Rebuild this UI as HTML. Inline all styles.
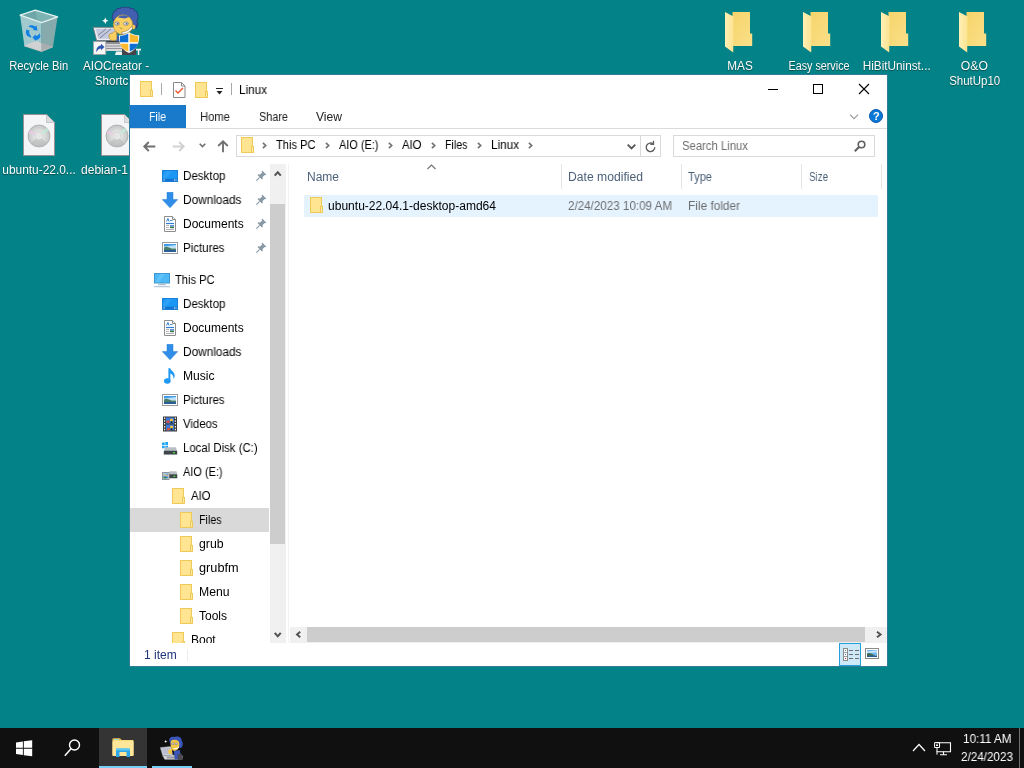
<!DOCTYPE html>
<html><head><meta charset="utf-8"><title>Linux</title>
<style>
*{box-sizing:border-box;margin:0;padding:0}
html,body{width:1024px;height:768px;overflow:hidden;background:#038387;font-family:"Liberation Sans","DejaVu Sans",sans-serif;font-size:12px;color:#000}
.a{position:absolute}
.t{position:absolute;white-space:nowrap;line-height:16px;height:16px;transform-origin:0 50%;will-change:transform}
.dl{position:absolute;color:#fff;text-align:center;white-space:nowrap;line-height:15px;font-size:12px;text-shadow:0 1px 1px rgba(0,0,0,.4),0 0 1px rgba(0,0,0,.25);will-change:transform}
.dl span{display:inline-block;transform-origin:50% 50%}
#win{position:absolute;left:130px;top:75px;width:757px;height:591px;background:#fff;overflow:hidden}
#winb{position:absolute;left:129px;top:74px;width:759px;height:593px;background:#2e7d96}
#tb{position:absolute;left:0;top:728px;width:1024px;height:40px;background:#101010}
svg{position:absolute;overflow:visible}
</style></head><body>
<svg width="0" height="0" style="position:absolute">
<defs>
<symbol id="fo" viewBox="0 0 14 16"><rect x="0.5" y="0.5" width="11" height="15" fill="#ffe591" stroke="#efca57"/><rect x="10.5" y="9.5" width="2" height="6" fill="#ffeaa6" stroke="#efca57"/></symbol>
<symbol id="pin" viewBox="0 0 11 11"><path d="M6.2 0.6 L10.4 4.8 L9.3 5.3 L8.6 4.9 L6.6 6.9 L6.7 8.9 L5.9 9.4 L1.6 5.1 L2.1 4.3 L4.1 4.4 L6.1 2.4 L5.7 1.7 Z" fill="#8797a3"/><path d="M3.6 7.4 L0.4 10.6" stroke="#8797a3" stroke-width="1.1"/></symbol>
<symbol id="dsk" viewBox="0 0 16 16"><rect x="0.5" y="2.5" width="15" height="11" fill="#1c97f3" stroke="#1a7fd6"/><path d="M5 3L10 3L4 10.500L1 10.500L1 8z" fill="#3aa8f8" opacity="0.6"/><rect x="1" y="10.800" width="14" height="2.200" fill="#1173cf"/><rect x="1.500" y="11.500" width="1.200" height="1" fill="#fff"/><rect x="12" y="11.500" width="1" height="1" fill="#fff"/><rect x="13.500" y="11.500" width="1" height="1" fill="#fff"/></symbol>
<symbol id="dwn" viewBox="0 0 16 16"><path d="M5 0.300h6v7.300h4.700L8 15.800L0.300 7.600h4.700z" fill="#2f8fe8" stroke="#2379d3" stroke-width="0.500"/></symbol>
<symbol id="doc" viewBox="0 0 16 16"><path d="M2.500 0.500h8l3 3v12h-11z" fill="#fff" stroke="#8e8e8e"/><path d="M10.500 0.500v3h3" fill="#f0f0f0" stroke="#8e8e8e"/><path d="M4.500 5.500L6 2.500L7 5.500" fill="none" stroke="#2f7fd6" stroke-width="1"/><path d="M8 4.500h2.500" stroke="#4a95de" stroke-width="1"/><path d="M4 7.500h8" stroke="#2f7fd6" stroke-width="1.200"/><path d="M4 9.500h3M4 11.500h3M4 13.500h8" stroke="#a9a9a9" stroke-width="0.900"/><rect x="8" y="9" width="4" height="1.500" fill="#5a9be0"/><rect x="8" y="10.500" width="4" height="1.700" fill="#3f7a55"/></symbol>
<symbol id="pic" viewBox="0 0 16 16"><rect x="0.500" y="2.500" width="15" height="11" fill="#fff" stroke="#9a9a9a"/><rect x="2" y="4" width="12" height="8" fill="#3f9be9"/><path d="M2 6.500L14 5V9H2z" fill="#bfe0f6"/><path d="M2 10.500V7.500Q4.500 6 7 7.500T12 8.500L14 8.800V10.500z" fill="#4d7d62"/><path d="M2 12V10Q7 9.300 14 10.300V12z" fill="#2a5c98"/></symbol>
<symbol id="pc" viewBox="0 0 16 16"><rect x="0.500" y="1.500" width="15" height="9.500" fill="#4cb9f6" stroke="#3d97d4"/><path d="M6 2L11 2L5 10.500L1 10.500z" fill="#6cc8fa" opacity="0.600"/><rect x="6.500" y="11.500" width="3" height="1" fill="#9cb3c5"/><rect x="4" y="12.300" width="8" height="0.900" fill="#9cb3c5"/><rect x="0" y="14.200" width="16" height="1" fill="#a8bfd1"/></symbol>
<symbol id="mus" viewBox="0 0 16 16"><ellipse cx="5.300" cy="13" rx="3.300" ry="2.700" fill="#1e98f5"/><path d="M6.400 0.300h1.900c0.400 2.600 4.800 3.600 4.400 8c-0.100 1.100-0.600 2.100-1.300 2.900c0.700-3-1.200-5-3.100-5.600V13h-1.900z" fill="#1e98f5"/></symbol>
<symbol id="vid" viewBox="0 0 16 16"><rect x="1" y="0.500" width="14" height="15" fill="#3b3b3b"/><rect x="4" y="1.500" width="8" height="6" fill="#3a78dc"/><rect x="4" y="8.500" width="8" height="6" fill="#3a78dc"/><path d="M2 1.500h1.200v1.500h-1.200z M2 4.300h1.200v1.500h-1.200z M2 7.100h1.200v1.500h-1.200z M2 9.900h1.200v1.500h-1.200z M2 12.700h1.200v1.500h-1.200z M12.800 1.500h1.200v1.500h-1.200z M12.800 4.300h1.200v1.500h-1.200z M12.800 7.100h1.200v1.500h-1.200z M12.800 9.900h1.200v1.500h-1.200z M12.800 12.700h1.200v1.500h-1.200z" fill="#f2f2f2"/><circle cx="9.500" cy="4" r="1.600" fill="#f2c53a"/><rect x="4.500" y="4.500" width="3" height="2.500" fill="#d8503a"/><circle cx="9.500" cy="11" r="1.600" fill="#f2c53a"/><rect x="5" y="12" width="3" height="2.300" fill="#d8503a"/><rect x="8.700" y="5.300" width="1.600" height="2" fill="#222"/><rect x="8.700" y="12.300" width="1.600" height="2" fill="#222"/></symbol>
<symbol id="hdc" viewBox="0 0 16 16"><path d="M0 2.500h2.700v2.600h-2.700z M3.300 2h2.700v3.100h-2.700z M0 5.700h2.700v2.600h-2.700z M3.300 5.700h2.700v3h-2.700z" fill="#1fa5f3"/><path d="M1.800 11L3.200 7.300h10.600L15.200 11z" fill="#b9c0c5"/><rect x="1.800" y="10.800" width="13.400" height="3.800" rx="0.700" fill="#3f464b"/><rect x="1.800" y="14" width="13.400" height="0.700" fill="#8d959b"/><rect x="11" y="12" width="1.800" height="1.300" fill="#3fe32c"/></symbol>
<symbol id="usb" viewBox="0 0 16 16"><path d="M6.500 10.500L7.500 7.300h7L15.300 10.500z" fill="#b9c0c5"/><rect x="6.500" y="10.300" width="8.800" height="4" rx="0.600" fill="#3f464b"/><rect x="11.500" y="11.700" width="1.800" height="1.300" fill="#3fe32c"/><rect x="0.500" y="8.500" width="6.500" height="7" fill="#e8ecef" stroke="#8d959b"/><rect x="1.500" y="9.500" width="4.500" height="5" fill="#4d8fd0"/><circle cx="3" cy="11" r="1.100" fill="#e9c9a0"/><path d="M1.500 14.500v-1.500q1.500-1.200 3 0v1.500z" fill="#3f8a5a"/><circle cx="5" cy="11.500" r="0.900" fill="#e9c9a0"/></symbol>
</defs>
</svg>
<svg width="0" height="0" style="position:absolute"><defs>
<linearGradient id="gfb" x1="0" y1="0" x2="1" y2="1"><stop offset="0" stop-color="#f5d46a"/><stop offset="1" stop-color="#fbe08a"/></linearGradient>
<linearGradient id="gff" x1="0" y1="0" x2="1" y2="0"><stop offset="0" stop-color="#fff0b5"/><stop offset="1" stop-color="#fde391"/></linearGradient>
<symbol id="bigfo" viewBox="0 0 28 42"><path d="M7.5 0H25V21.5H27.2V34H7.5z" fill="url(#gfb)"/><path d="M0 0L8.6 4.6L8.2 40.5L0 34.5z" fill="url(#gff)"/></symbol>
<radialGradient id="gcd" cx="0.5" cy="0.5" r="0.5"><stop offset="0" stop-color="#f4f4f4"/><stop offset="0.25" stop-color="#e9e9e9"/><stop offset="1" stop-color="#c4c6c6"/></radialGradient>
<symbol id="iso" viewBox="0 0 32 42"><path d="M0.5 0.5H23.5L31.5 8.5V41.5H0.5z" fill="#f4f5f7" stroke="#9a8f92"/><path d="M23.5 0.5V8.5H31.5z" fill="#dcdde0" stroke="#b5b0b2" stroke-width="0.6"/><circle cx="16" cy="22" r="11" fill="url(#gcd)" stroke="#a9abab" stroke-width="0.8"/><path d="M16 22L5.5 19.5A11 11 0 0 1 7 16z" fill="#f0c8e8" opacity="0.7"/><path d="M16 22L23.5 14A11 11 0 0 1 25.5 16.5z" fill="#bff0d8" opacity="0.8"/><path d="M16 22L8 29.5A11 11 0 0 0 24 29.5z" fill="#b4b7b7" opacity="0.55"/><circle cx="16" cy="22" r="3.6" fill="#f1f1f1" stroke="#c9c9c9" stroke-width="0.7"/><circle cx="16" cy="22" r="1.4" fill="#fbfbfb" stroke="#bdbdbd" stroke-width="0.6"/></symbol>
</defs></svg>
<!-- recycle bin -->
<svg style="left:19px;top:9px" width="40" height="44" viewBox="0 0 40 44">
<path d="M1.100 6.200L16.300 1.200L38.600 7.800L22.600 13.700z" fill="#6fa7a8"/><path d="M16.300 1.200L38.600 7.800L22.600 13.700L18 10z" fill="#7db3b3"/>
<path d="M1.100 6.200L22.600 13.700V42.600L5.400 37z" fill="#a2cace"/>
<path d="M22.600 13.700L38.600 7.800L33.900 37.900L22.600 42.600z" fill="#87aaad"/>
<path d="M5 36.700L16.300 32L22.600 34V42.600z" fill="#cfd1d3"/><path d="M22.600 34L34.300 37.500L22.600 42.600z" fill="#a9aeb1"/><path d="M5 36.700L5.400 37L22.600 42.600L33.900 37.900" fill="none" stroke="#d9c4c0" stroke-width="0.600"/>
<path d="M1.100 6.200L16.300 1.200L38.600 7.800L22.600 13.700z" fill="none" stroke="#e4f1f1" stroke-width="1.300" stroke-linejoin="round"/>
<g fill="#1080e4"><path d="M9.500 17.500C11 15.500 14 16 16 17.500L17.500 16.500L18.500 21.500L13.500 21L15 20C13.500 18.800 12 18.500 9.500 17.500z"/><path d="M7.500 20.500L10.500 21.500C9.800 23.500 10.500 25.500 12 27L12.300 28.800L8.500 27C6.500 25 6.500 22.500 7.500 20.500z"/><path d="M13.500 28.500L16.500 25.500L17 27C19 26.500 20 25.500 20.500 24L21.500 27.500C20.500 30 18.500 31 16.800 31L17 32.300z"/></g>
</svg>
<div class="dl" style="left:-11px;top:59px;width:100px"><span style="transform:scaleX(0.9312)">Recycle Bin</span></div>
<!-- AIOCreator -->
<svg style="left:92px;top:5px" width="50" height="51" viewBox="0 0 50 51">
<g fill="#2c3c80"><ellipse cx="33.200" cy="11.800" rx="11.500" ry="8.500"/><circle cx="43.5" cy="11.8" r="3.200"/><circle cx="42.5" cy="14.8" r="3.200"/><circle cx="39.6" cy="17.3" r="3.200"/><circle cx="35.5" cy="18.6" r="3.200"/><circle cx="30.9" cy="18.6" r="3.200"/><circle cx="26.8" cy="17.3" r="3.200"/><circle cx="23.9" cy="14.8" r="3.200"/><circle cx="22.9" cy="11.8" r="3.200"/><circle cx="23.9" cy="8.8" r="3.200"/><circle cx="26.8" cy="6.3" r="3.200"/><circle cx="30.9" cy="5.0" r="3.200"/><circle cx="35.5" cy="5.0" r="3.200"/><circle cx="39.6" cy="6.3" r="3.200"/><circle cx="42.5" cy="8.8" r="3.200"/><path d="M40 14L46.500 18L45 23.500L40 24z"/></g>
<g fill="#4360b0" transform="translate(33.200 11.800) scale(0.930) translate(-33.200 -11.800)"><ellipse cx="33.200" cy="11.800" rx="11.500" ry="8.500"/><circle cx="43.5" cy="11.8" r="3.200"/><circle cx="42.5" cy="14.8" r="3.200"/><circle cx="39.6" cy="17.3" r="3.200"/><circle cx="35.5" cy="18.6" r="3.200"/><circle cx="30.9" cy="18.6" r="3.200"/><circle cx="26.8" cy="17.3" r="3.200"/><circle cx="23.9" cy="14.8" r="3.200"/><circle cx="22.9" cy="11.8" r="3.200"/><circle cx="23.9" cy="8.8" r="3.200"/><circle cx="26.8" cy="6.3" r="3.200"/><circle cx="30.9" cy="5.0" r="3.200"/><circle cx="35.5" cy="5.0" r="3.200"/><circle cx="39.6" cy="6.3" r="3.200"/><circle cx="42.5" cy="8.8" r="3.200"/><path d="M40 14L46 18L44.500 23.200L40 24z"/></g>
<path d="M1.200 22.300H24L26 35.500H4.600z" fill="#ececf1" stroke="#6e7078" stroke-width="0.800"/><path d="M3.600 23.800H22L23.600 33.800H6.400z" fill="#c3c9df"/><path d="M6 30.500L14 23.800M8 33L19 23.800" stroke="#5d616e" stroke-width="0.700"/>
<path d="M13 36.500H37V46H13z" fill="#d9d9dc"/><path d="M13 38.500H37M13 41H37M13 43.500H37" stroke="#8a8a90" stroke-width="0.900"/><path d="M5 36H30V37.500H5z" fill="#3a3a3e"/>
<path d="M24 46.500H32V50H23z" fill="#f2f2f2"/><path d="M30 44H44V50H30z" fill="#45464c"/><path d="M44 43.800H49V45.500H47.300V50H45.800V45.500H44z" fill="#f2f2f2"/>
<ellipse cx="31" cy="19.800" rx="9.800" ry="10" fill="#fbd062" stroke="#a97f2a" stroke-width="0.600"/><ellipse cx="41.500" cy="22" rx="1.800" ry="2.300" fill="#fbd062" stroke="#a97f2a" stroke-width="0.500"/>
<path d="M26 12.500C28 9.500 34 9.500 37 12L33 13.500z" fill="#4360b0"/>
<ellipse cx="25" cy="18.600" rx="2.300" ry="1.700" fill="#e4e8f4" stroke="#4a4f6a" stroke-width="0.500"/><ellipse cx="34" cy="18.600" rx="2.500" ry="1.700" fill="#e4e8f4" stroke="#4a4f6a" stroke-width="0.500"/><circle cx="25.600" cy="18.700" r="0.900" fill="#59607a"/><circle cx="34.600" cy="18.700" r="0.900" fill="#59607a"/>
<path d="M27.800 22.500C28.500 24 30 24 30.500 23" fill="none" stroke="#8a6a20" stroke-width="0.600"/>
<path d="M29.500 27.200C33.500 27 37.500 24.500 39.800 21.500L40.500 23.500C38 27 33.500 29.300 30 29z" fill="#fff" stroke="#6a5a3a" stroke-width="0.500"/>
<path d="M17 32C16.500 29 18.500 28 20 28.500L22.500 26.300C24 26 25 27.500 24.300 29L25.500 35L21 35.500C18.500 35.500 17.300 34 17 32z" fill="#fbd062" stroke="#a97f2a" stroke-width="0.600"/>
<path d="M25 31L27 31L27.500 37L24.500 36z" fill="#3b5bb0"/>
<path d="M37 27.300C33 30 29.500 30.300 27 30.300C27 40 30 45 37 47.900C44 45 47.200 40 47.200 30.300C44.500 30.300 41 30 37 27.300z" fill="#fff"/>
<path d="M36.300 28.600C33.500 30.300 30.500 31 28 31.100V37.300H36.300z" fill="#0d6fd2"/><path d="M37.700 28.600C40.500 30.300 43.500 31 46.200 31.100V37.300H37.700z" fill="#fdb92e"/>
<path d="M28.100 38.700H36.300V46.600C31.500 44.500 29 42 28.100 38.700z" fill="#fdb92e"/><path d="M46.100 38.700H37.700V46.600C42.500 44.500 45.200 42 46.100 38.700z" fill="#0d6fd2"/>
<path d="M13.300 12.500l1 2.200l2.200 1l-2.200 1l-1 2.200l-1-2.200l-2.200-1l2.200-1z" fill="#fff"/>
<rect x="1.500" y="36.500" width="12.300" height="13" fill="#f6f6f6" stroke="#a0a0a0" stroke-width="0.800"/><path d="M4.500 47.500C3.800 42.500 6.500 40.500 9 40.500V38.700L12.500 42L9 45.300V43.400C7 43.400 5.300 44.800 4.500 47.500z" fill="#2a55b0"/>
</svg>
<div class="dl" style="left:66px;top:59px;width:100px"><span style="transform:scaleX(0.9704)">AIOCreator -</span><br><span style="transform:scaleX(0.9619)">Shortcut</span></div>
<!-- iso files -->
<svg style="left:23px;top:114px" width="32" height="42"><use href="#iso"/></svg>
<div class="dl" style="left:-11px;top:163px;width:100px"><span style="transform:scaleX(0.9924)">ubuntu-22.0...</span></div>
<svg style="left:101px;top:114px" width="32" height="42"><use href="#iso"/></svg>
<div class="dl" style="left:81.300px;top:163px;width:100px;text-align:left"><span style="transform-origin:0 50%;transform:scaleX(1.0039)">debian-1</span></div>
<!-- right folders -->
<svg style="left:725px;top:12px" width="28" height="42"><use href="#bigfo"/></svg>
<div class="dl" style="left:690px;top:59px;width:100px"><span style="transform:scaleX(0.9802)">MAS</span></div>
<svg style="left:803px;top:12px" width="28" height="42"><use href="#bigfo"/></svg>
<div class="dl" style="left:769px;top:59px;width:100px"><span style="transform:scaleX(0.8966)">Easy service</span></div>
<svg style="left:881px;top:12px" width="28" height="42"><use href="#bigfo"/></svg>
<div class="dl" style="left:847px;top:59px;width:100px"><span style="transform:scaleX(0.9804)">HiBitUninst...</span></div>
<svg style="left:959px;top:12px" width="28" height="42"><use href="#bigfo"/></svg>
<div class="dl" style="left:924px;top:59px;width:100px"><span style="transform:scaleX(1.0123)">O&amp;O</span><br><span style="position:relative;left:1px;transform:scaleX(0.9555)">ShutUp10</span></div>

<div id="winb"></div>
<div id="win">
<div id="w" style="position:absolute;left:-130px;top:-75px;width:1024px;height:768px">
<!-- title bar icons -->
<svg style="left:140px;top:81px" width="14" height="16"><use href="#fo"/></svg>
<div class="a" style="left:161px;top:83px;width:1px;height:12px;background:#a8a8a8"></div>
<svg style="left:173px;top:82px" width="13" height="16" viewBox="0 0 13 16"><path d="M0.5 0.5h8l3.5 3.5v11.5h-11.5z" fill="#fff" stroke="#8a8a8a"/><path d="M8.5 0.5v3.5h3.5" fill="none" stroke="#8a8a8a"/><path d="M2.5 8.5l2.5 2.5l5-5" fill="none" stroke="#e8542a" stroke-width="1.4"/></svg>
<svg style="left:195px;top:82px" width="14" height="16"><use href="#fo"/></svg>
<div class="a" style="left:216px;top:88px;width:7px;height:1px;background:#222"></div>
<svg style="left:216px;top:91px" width="7" height="4" viewBox="0 0 7 4"><path d="M0.500 0h6l-3 3.400z" fill="#222"/></svg>
<div class="a" style="left:231px;top:83px;width:1px;height:12px;background:#a8a8a8"></div>
<!-- caption buttons -->
<div class="a" style="left:768px;top:89px;width:10px;height:1px;background:#000"></div>
<div class="a" style="left:813px;top:84px;width:10px;height:10px;border:1px solid #000"></div>
<svg style="left:859px;top:84px" width="10" height="10" viewBox="0 0 10 10"><path d="M0 0L10 10M10 0L0 10" stroke="#000" stroke-width="1.1"/></svg>
<!-- ribbon tabs -->
<div class="a" style="left:130px;top:105px;width:56px;height:23px;background:#1979ca"></div>
<div class="a" style="left:130px;top:128px;width:757px;height:1px;background:#dadbdc"></div>
<svg style="left:849px;top:114px" width="10" height="6" viewBox="0 0 10 6"><path d="M1 0.700L5 4.700L9 0.700" fill="none" stroke="#9a9a9a" stroke-width="1.100"/></svg>
<div class="a" style="left:869px;top:109px;width:14px;height:14px;border-radius:7px;background:#0b78d8;border:1px solid #0c5caa"></div>
<span class="t" style="left:872.5px;top:108px;color:#fff;font-weight:bold;font-size:11px">?</span>
<!-- nav arrows -->
<svg style="left:143px;top:140.500px" width="13" height="11" viewBox="0 0 13 11"><path d="M1.300 5.500H12.300M5.800 1L1.300 5.500L5.800 10" fill="none" stroke="#707070" stroke-width="1.900"/></svg>
<svg style="left:172px;top:140.500px" width="13" height="11" viewBox="0 0 13 11"><path d="M0.700 5.500H11.700M7.200 1L11.700 5.500L7.200 10" fill="none" stroke="#d2d2d2" stroke-width="1.900"/></svg>
<svg style="left:199px;top:143px" width="7" height="4.500" viewBox="0 0 7 4.500"><path d="M0.700 0.700L3.500 3.500L6.300 0.700" fill="none" stroke="#707070" stroke-width="1.600"/></svg>
<svg style="left:217px;top:139.500px" width="12" height="13" viewBox="0 0 12 13"><path d="M6 1.300V12.300M1.200 6L6 1.300L10.800 6" fill="none" stroke="#707070" stroke-width="1.900"/></svg>
<!-- address bar -->
<div class="a" style="left:236px;top:135px;width:405px;height:22px;border:1px solid #d9d9d9;background:#fff"></div>
<div class="a" style="left:640px;top:135px;width:21px;height:22px;border:1px solid #d9d9d9;background:#fff"></div>
<svg style="left:241px;top:137px" width="14" height="16"><use href="#fo"/></svg>
<svg style="left:627px;top:144px" width="9" height="6" viewBox="0 0 9 6"><path d="M0.700 0.700L4.500 4.500L8.300 0.700" fill="none" stroke="#555" stroke-width="1.800"/></svg>
<svg style="left:645px;top:140px" width="11" height="13" viewBox="0 0 11 13"><path d="M9.800 7.300A4.300 4.300 0 1 1 8.260 4" fill="none" stroke="#606060" stroke-width="1.400"/><path d="M8.500 0.800V4.300H5.300" fill="none" stroke="#606060" stroke-width="1.300"/></svg>
<!-- search -->
<div class="a" style="left:673px;top:135px;width:202px;height:22px;border:1px solid #d9d9d9;background:#fff"></div>
<svg style="left:854px;top:140px" width="12" height="12" viewBox="0 0 12 12"><circle cx="7.500" cy="4.500" r="3.300" fill="none" stroke="#5f5f5f" stroke-width="1.600"/><path d="M5.200 6.800L0.800 11.200" stroke="#5f5f5f" stroke-width="2"/></svg>
<svg style="left:262px;top:142px" width="5" height="7" viewBox="0 0 5 7"><path d="M0.900 0.800L3.700 3.500L0.900 6.200" fill="none" stroke="#737373" stroke-width="1.700"/></svg>
<svg style="left:325px;top:142px" width="5" height="7" viewBox="0 0 5 7"><path d="M0.900 0.800L3.700 3.500L0.900 6.200" fill="none" stroke="#737373" stroke-width="1.700"/></svg>
<svg style="left:388px;top:142px" width="5" height="7" viewBox="0 0 5 7"><path d="M0.900 0.800L3.700 3.500L0.900 6.200" fill="none" stroke="#737373" stroke-width="1.700"/></svg>
<svg style="left:431px;top:142px" width="5" height="7" viewBox="0 0 5 7"><path d="M0.900 0.800L3.700 3.500L0.900 6.200" fill="none" stroke="#737373" stroke-width="1.700"/></svg>
<svg style="left:477px;top:142px" width="5" height="7" viewBox="0 0 5 7"><path d="M0.900 0.800L3.700 3.500L0.900 6.200" fill="none" stroke="#737373" stroke-width="1.700"/></svg>
<svg style="left:528px;top:142px" width="5" height="7" viewBox="0 0 5 7"><path d="M0.900 0.800L3.700 3.500L0.900 6.200" fill="none" stroke="#737373" stroke-width="1.700"/></svg>
<!-- nav pane -->
<div class="a" style="left:130px;top:508px;width:139px;height:24px;background:#d9d9d9"></div>
<svg style="left:162px;top:168px" width="16" height="16"><use href="#dsk"/></svg>
<svg style="left:162px;top:192px" width="16" height="16"><use href="#dwn"/></svg>
<svg style="left:162px;top:216px" width="16" height="16"><use href="#doc"/></svg>
<svg style="left:162px;top:240px" width="16" height="16"><use href="#pic"/></svg>
<svg style="left:154px;top:272px" width="16" height="16"><use href="#pc"/></svg>
<svg style="left:162px;top:296px" width="16" height="16"><use href="#dsk"/></svg>
<svg style="left:162px;top:320px" width="16" height="16"><use href="#doc"/></svg>
<svg style="left:162px;top:344px" width="16" height="16"><use href="#dwn"/></svg>
<svg style="left:162px;top:368px" width="16" height="16"><use href="#mus"/></svg>
<svg style="left:162px;top:392px" width="16" height="16"><use href="#pic"/></svg>
<svg style="left:162px;top:416px" width="16" height="16"><use href="#vid"/></svg>
<svg style="left:162px;top:440px" width="16" height="16"><use href="#hdc"/></svg>
<svg style="left:162px;top:464px" width="16" height="16"><use href="#usb"/></svg>
<svg style="left:172px;top:488px" width="14" height="16"><use href="#fo"/></svg>
<svg style="left:180px;top:512px" width="14" height="16"><use href="#fo"/></svg>
<svg style="left:180px;top:536px" width="14" height="16"><use href="#fo"/></svg>
<svg style="left:180px;top:560px" width="14" height="16"><use href="#fo"/></svg>
<svg style="left:180px;top:584px" width="14" height="16"><use href="#fo"/></svg>
<svg style="left:180px;top:608px" width="14" height="16"><use href="#fo"/></svg>
<svg style="left:172px;top:632px" width="14" height="16"><use href="#fo"/></svg>
<svg style="left:256px;top:170px" width="11" height="11"><use href="#pin"/></svg>
<svg style="left:256px;top:194px" width="11" height="11"><use href="#pin"/></svg>
<svg style="left:256px;top:218px" width="11" height="11"><use href="#pin"/></svg>
<svg style="left:256px;top:242px" width="11" height="11"><use href="#pin"/></svg>
<!-- nav scrollbar -->
<div class="a" style="left:270px;top:164px;width:16px;height:479px;background:#f0f0f0"></div>
<div class="a" style="left:270px;top:204px;width:15px;height:340px;background:#cdcdcd"></div>
<svg style="left:274px;top:170px" width="7.500" height="6.500" viewBox="0 0 7 6"><path d="M0.700 5.200L3.500 2L6.300 5.200" fill="none" stroke="#505050" stroke-width="1.900"/></svg>
<svg style="left:274px;top:632px" width="7.500" height="6.500" viewBox="0 0 7 6"><path d="M0.700 0.800L3.500 4L6.300 0.800" fill="none" stroke="#505050" stroke-width="1.900"/></svg>
<div class="a" style="left:288px;top:164px;width:1px;height:480px;background:#f2f2f2"></div>
<!-- columns -->
<svg style="left:427px;top:163.700px" width="9" height="6" viewBox="0 0 9 6"><path d="M0.5 5L4.5 1L8.5 5" fill="none" stroke="#707070" stroke-width="1.100"/></svg>
<div class="a" style="left:561px;top:164px;width:1px;height:25px;background:#e5e5e5"></div>
<div class="a" style="left:681px;top:164px;width:1px;height:25px;background:#e5e5e5"></div>
<div class="a" style="left:801px;top:164px;width:1px;height:25px;background:#e5e5e5"></div>
<div class="a" style="left:881px;top:164px;width:1px;height:25px;background:#e5e5e5"></div>
<!-- row -->
<div class="a" style="left:304px;top:195px;width:574px;height:22px;background:#e5f3ff"></div>
<svg style="left:310px;top:197px" width="14" height="16"><use href="#fo"/></svg>
<!-- h scrollbar -->
<div class="a" style="left:290px;top:627px;width:597px;height:16px;background:#f0f0f0"></div>
<div class="a" style="left:307px;top:627px;width:558px;height:15px;background:#cdcdcd"></div>
<svg style="left:295px;top:631px" width="6" height="7" viewBox="0 0 6 7"><path d="M5.200 0.700L2 3.500L5.200 6.300" fill="none" stroke="#505050" stroke-width="1.900"/></svg>
<svg style="left:876px;top:631px" width="7" height="7" viewBox="0 0 7 7"><path d="M1 0.700L4.600 3.500L1 6.300" fill="none" stroke="#505050" stroke-width="1.900"/></svg>
<!-- status bar -->
<div class="a" style="left:130px;top:643px;width:757px;height:23px;background:#fff;z-index:1"></div>
<div class="a" style="left:187px;top:649px;width:1px;height:12px;background:#ececec;z-index:2"></div>
<div class="a" style="left:839px;top:643px;width:22px;height:23px;background:#cde8f6;border:1px solid #26a0da;z-index:2"></div>
<svg style="left:843px;top:648px;z-index:2" width="16" height="13" viewBox="0 0 16 13"><rect x="0.500" y="0.500" width="4" height="12" fill="#fff" stroke="#8a8a8a"/><path d="M0.500 4.500h4M0.500 8.500h4" stroke="#8a8a8a" stroke-width="0.800"/><rect x="2" y="2" width="1" height="1" fill="#3c8a5a"/><rect x="2" y="6" width="1" height="1" fill="#3c7de0"/><rect x="2" y="10" width="1" height="1" fill="#e02a2a"/><path d="M6 2.500h4M12 2.500h4M6 6.500h4M12 6.500h4M6 10.500h4M12 10.500h4" stroke="#6d6d6d" stroke-width="1"/></svg>
<svg style="left:865px;top:648px;z-index:2" width="14" height="11" viewBox="0 0 14 11"><rect x="0.500" y="0.500" width="13" height="10" fill="#fff" stroke="#8a8a8a"/><rect x="2" y="2" width="10" height="7" fill="#6fb6ee"/><path d="M2 3.500L12 2.600V4.500L2 5z" fill="#cfe6f8"/><path d="M2 9V5.500Q5 4 8 6.500T12 7V9Z" fill="#3f6e56"/><path d="M2 9V8Q7 7 12 8.200V9Z" fill="#2a5d9a"/></svg>

<span class="t" style="left:239px;top:81.5px;transform:scaleX(0.9760);">Linux</span>
<span class="t" style="left:149px;top:109px;color:#fff;transform:scaleX(0.8788);">File</span>
<span class="t" style="left:200px;top:109px;color:#222;transform:scaleX(0.9370);">Home</span>
<span class="t" style="left:259px;top:109px;color:#222;transform:scaleX(0.9054);">Share</span>
<span class="t" style="left:316px;top:109px;color:#222;transform:scaleX(1.0079);">View</span>
<span class="t" style="left:276px;top:136.7px;transform:scaleX(0.9253);">This PC</span>
<span class="t" style="left:339px;top:136.7px;transform:scaleX(0.9113);">AIO (E:)</span>
<span class="t" style="left:402px;top:136.7px;transform:scaleX(0.9433);">AIO</span>
<span class="t" style="left:445px;top:136.7px;transform:scaleX(0.8878);">Files</span>
<span class="t" style="left:491px;top:136.7px;transform:scaleX(0.9760);">Linux</span>
<span class="t" style="left:682px;top:137.5px;color:#6d6d6d;transform:scaleX(0.9422);">Search Linux</span>
<span class="t" style="left:307px;top:168.5px;color:#4c607a;transform:scaleX(0.9995);">Name</span>
<span class="t" style="left:568px;top:168.5px;color:#4c607a;transform:scaleX(1.0129);">Date modified</span>
<span class="t" style="left:688px;top:168.5px;color:#4c607a;transform:scaleX(0.9225);">Type</span>
<span class="t" style="left:808.5px;top:168.5px;color:#4c607a;transform:scaleX(0.8139);">Size</span>
<span class="t" style="left:328px;top:197.5px;transform:scaleX(1.0033);">ubuntu-22.04.1-desktop-amd64</span>
<span class="t" style="left:568px;top:197.5px;color:#6d6d6d;transform:scaleX(0.9681);">2/24/2023 10:09 AM</span>
<span class="t" style="left:688px;top:197.5px;color:#6d6d6d;transform:scaleX(0.9870);">File folder</span>
<span class="t" style="left:183px;top:167.5px;transform:scaleX(0.9652);">Desktop</span>
<span class="t" style="left:183px;top:191.5px;transform:scaleX(0.9853);">Downloads</span>
<span class="t" style="left:183px;top:215.5px;transform:scaleX(0.9967);">Documents</span>
<span class="t" style="left:183px;top:239.5px;transform:scaleX(0.9571);">Pictures</span>
<span class="t" style="left:175px;top:271.5px;transform:scaleX(0.9277);">This PC</span>
<span class="t" style="left:183px;top:295.5px;transform:scaleX(0.9652);">Desktop</span>
<span class="t" style="left:183px;top:319.5px;transform:scaleX(0.9967);">Documents</span>
<span class="t" style="left:183px;top:343.5px;transform:scaleX(0.9853);">Downloads</span>
<span class="t" style="left:183px;top:367.5px;transform:scaleX(1.0082);">Music</span>
<span class="t" style="left:183px;top:391.5px;transform:scaleX(0.9594);">Pictures</span>
<span class="t" style="left:183px;top:415.5px;transform:scaleX(0.9484);">Videos</span>
<span class="t" style="left:183px;top:439.5px;transform:scaleX(0.9481);">Local Disk (C:)</span>
<span class="t" style="left:183px;top:463.5px;transform:scaleX(0.9136);">AIO (E:)</span>
<span class="t" style="left:191px;top:487.5px;transform:scaleX(0.9481);">AIO</span>
<span class="t" style="left:199px;top:511.5px;transform:scaleX(0.8917);">Files</span>
<span class="t" style="left:199px;top:535.5px;transform:scaleX(1.0237);">grub</span>
<span class="t" style="left:199px;top:559.5px;transform:scaleX(1.0600);">grubfm</span>
<span class="t" style="left:199px;top:583.5px;transform:scaleX(1.0189);">Menu</span>
<span class="t" style="left:199px;top:607.5px;transform:scaleX(0.9852);">Tools</span>
<span class="t" style="left:191px;top:631.5px;transform:scaleX(0.9965);">Boot</span>
<span class="t" style="left:144px;top:646.5px;color:#1f3478;transform:scaleX(0.9943);z-index:2;">1 item</span>
</div>
</div>
<div id="tb">
<div id="tk" style="position:absolute;left:0;top:-728px;width:1024px;height:768px">
<svg style="left:15.700px;top:739.800px" width="16.200" height="16.500" viewBox="0 0 16 16"><path d="M0 2.300L6.800 1.350V7.500H0zM7.700 1.200L16 0V7.500H7.700zM0 8.400H6.800V14.600L0 13.700zM7.700 8.400H16V16L7.700 14.800z" fill="#fff"/></svg>
<svg style="left:64px;top:739.200px" width="17" height="18" viewBox="0 0 17 18"><circle cx="10.500" cy="6" r="5" fill="none" stroke="#fff" stroke-width="1.400"/><path d="M7 9.800L0.800 16.800" stroke="#fff" stroke-width="1.500"/></svg>
<div class="a" style="left:99px;top:728px;width:48px;height:40px;background:#343434"></div>
<div class="a" style="left:99px;top:766px;width:48px;height:2px;background:#78cff5"></div>
<div class="a" style="left:152px;top:766px;width:40px;height:2px;background:#78cff5"></div>
<!-- explorer icon -->
<svg style="left:112px;top:738px" width="22" height="19" viewBox="0 0 22 19"><path d="M0.500 1.500Q0.500 0.500 1.500 0.500H8L9.500 2H21Q21.500 2 21.500 2.600V17Q21.500 18 20.500 18H1.500Q0.500 18 0.500 17z" fill="#fbd775"/><path d="M0.500 1.500Q0.500 0.500 1.500 0.500H8L9.500 2H0.500z" fill="#e8b33c"/><rect x="2" y="1" width="5" height="0.900" fill="#8fe0f0"/><rect x="0.500" y="3" width="21" height="15" rx="1" fill="#ffe699"/><path d="M4 19V11.500Q4 10.500 5 10.500H17Q18 10.500 18 11.500V19H14.500V14H7.500V19z" fill="#2ea7e8"/><path d="M4 12.500V11.500Q4 10.500 5 10.500H17Q18 10.500 18 11.500V12.500z" fill="#5cc8f5"/></svg>
<!-- aiocreator small -->
<svg style="left:159px;top:736px" width="26" height="25" viewBox="0 0 49 50">
<path d="M1 23L22 21L26 38L6 40z" fill="#cfd3dc" stroke="#8b8e96" stroke-width="1"/><path d="M4 25L20 23.500L23 35L8 37z" fill="#b8bed0"/>
<path d="M6 40L26 38L46 40L44 47L10 47z" fill="#d8d8da" stroke="#8b8e96" stroke-width="0.800"/><rect x="14" y="41" width="20" height="4" fill="#9a9a9e"/>
<path d="M20 12C16 4 24 0 30 2C36-1 45 3 44 10C48 14 46 22 42 24L22 18z" fill="#3b56b8"/>
<path d="M22 12C22 6 38 6 39 14C40 22 36 30 30 30C24 30 21 22 22 12z" fill="#f2c744"/>
<path d="M24 14h4v3h-4zM31 14h4v3h-4z" fill="#e9ecf5" stroke="#3a4a8a" stroke-width="0.700"/>
<path d="M27 24C31 25 35 24 38 21L38.500 23C35 26.500 31 27 27.500 26z" fill="#fff"/>
<path d="M17 30C17 26 20 26 21 28L23 25L25 27L24 36L18 36z" fill="#f2c744"/>
<path d="M28 30L40 28L44 47L30 47z" fill="#3b56b8"/><path d="M36 36L44 36L46 48L36 48z" fill="#4a4a50"/>
<path d="M12 8l0.900 2.100l2.100 0.900l-2.100 0.900l-0.900 2.100l-0.900-2.100l-2.100-0.900l2.100-0.900z" fill="#fff"/>
</svg>
<!-- tray -->
<svg style="left:912px;top:743px" width="14" height="9" viewBox="0 0 14 9"><path d="M1 8L7 1.500L13 8" fill="none" stroke="#fff" stroke-width="1.200"/></svg>
<svg style="left:934px;top:742px" width="18" height="14" viewBox="0 0 18 14"><path d="M2.500 0.700H16.500V9.700H2.500" fill="none" stroke="#fff" stroke-width="1.100"/><path d="M9.500 9.700V12.700M6 12.700H13" stroke="#fff" stroke-width="1.100"/><path d="M0.600 0.600H5.500V5.500H0.600zM3 5.500V12.700" fill="none" stroke="#fff" stroke-width="1"/><path d="M2 2.500h2v1.500h-2z" fill="#fff"/></svg>
<div class="a" style="left:1019px;top:728px;width:1px;height:40px;background:#6f6f6f"></div>

</div>
</div>
<span class="t" style="left:962.5px;top:730.5px;color:#fff;transform:scaleX(0.9737);">10:11 AM</span>
<span class="t" style="left:961px;top:748.5px;color:#fff;transform:scaleX(0.9740);">2/24/2023</span>
</body></html>
